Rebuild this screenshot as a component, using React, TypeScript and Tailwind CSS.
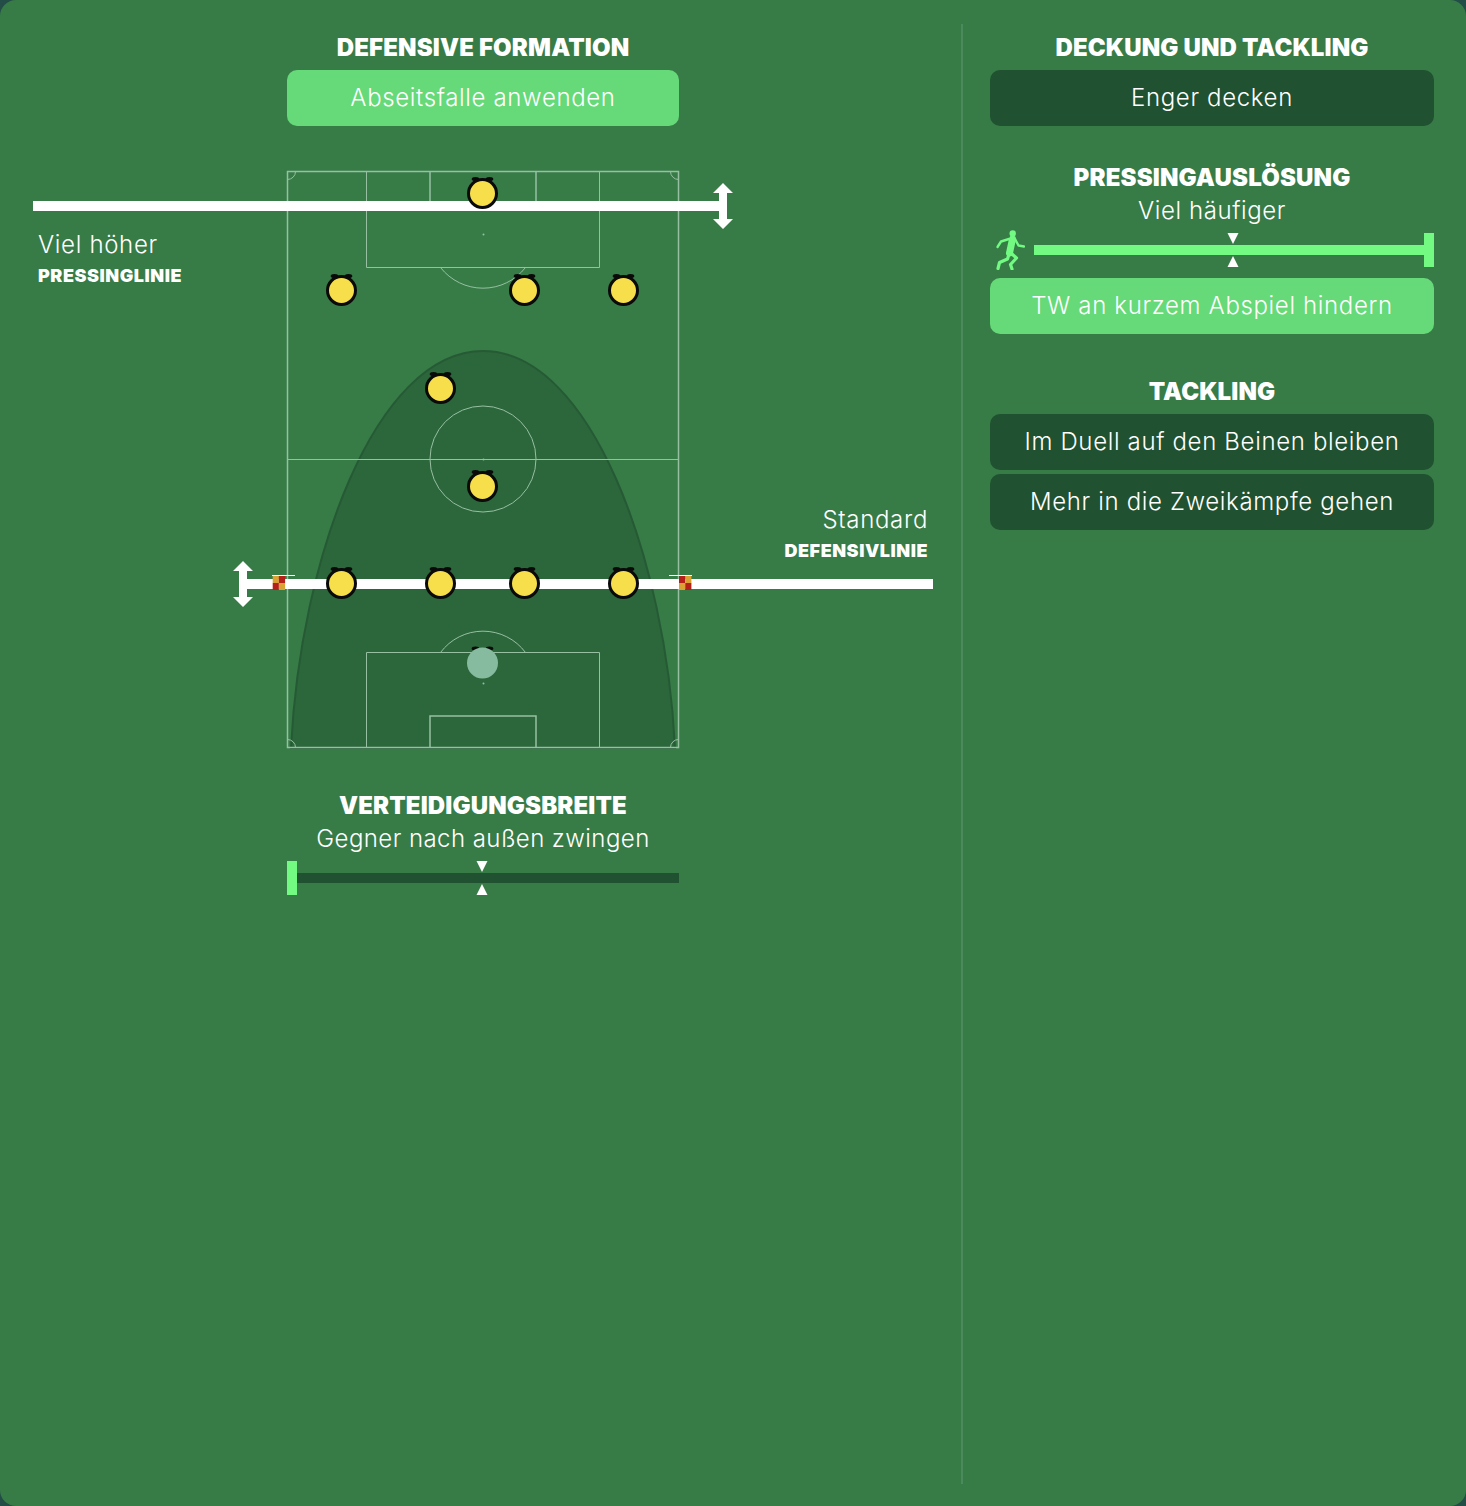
const fontStack = { fontFamily: "Inter, 'Liberation Sans', sans-serif" };

const players = [
  [482.5, 193.5],
  [341.5, 290.5],
  [524.5, 290.5],
  [623.5, 290.5],
  [440.5, 388.5],
  [482.5, 486.5],
  [341.5, 583.5],
  [440.5, 583.5],
  [524.5, 583.5],
  [623.5, 583.5],
];

function Heading({ children }: { children: React.ReactNode }) {
  return (
    <h2 className="text-center text-[24px] leading-[28px] font-black tracking-[0.006em] text-white">
      {children}
    </h2>
  );
}

function Value({ children }: { children: React.ReactNode }) {
  return (
    <p className="text-center text-[24px] leading-[32px] font-light tracking-[0.025em] text-white">
      {children}
    </p>
  );
}

function Pill({ children, active }: { children: React.ReactNode; active?: boolean }) {
  return (
    <button
      className={
        "flex h-14 w-full items-center justify-center rounded-[10px] text-[24px] font-light tracking-[0.027em] text-white " +
        (active ? "bg-[#66d978]" : "bg-[#205130]")
      }
    >
      {children}
    </button>
  );
}

function Markers() {
  return (
    <svg className="absolute top-0 left-1/2 -ml-[7px] h-[34px] w-[12px]" viewBox="0 0 12 34">
      <path d="M.5 0h11l-5.500 11z" fill="#fff" />
      <path d="M.5 34h11l-5.500-11z" fill="#fff" />
    </svg>
  );
}

function Runner() {
  return (
    <svg className="h-[40px] w-[30px] shrink-0" viewBox="0 0 30 40" fill="none">
      <circle cx="17.7" cy="3.4" r="3.2" fill="#72fa82" />
      <g stroke="#72fa82" strokeLinecap="round" strokeLinejoin="round">
        <path d="M17.5 9 14.5 23" strokeWidth="7" />
        <path d="M14 9 6 11.500 2.500 17" strokeWidth="2.400" />
        <path d="M20 9 23.500 15.500 29 16.500" strokeWidth="2.400" />
        <path d="M14 24 12.500 29 4.500 32.500 3 38.500" strokeWidth="3.200" />
        <path d="M17 24 21.500 28 15.500 34.500 17 39" strokeWidth="3.200" />
      </g>
    </svg>
  );
}

function Arrow({ x, y }: { x: number; y: number }) {
  return (
    <path
      transform={`translate(${x} ${y})`}
      d="M0 0 10 10H4V36H10L0 46-10 36H-4V10H-10z"
      fill="#fff"
    />
  );
}

function Flag({ x, flip }: { x: number; flip?: boolean }) {
  const orange = "#dba132";
  const red = "#b5211a";
  return (
    <g>
      <rect x={x} y={576} width={6.2} height={7} fill={flip ? red : orange} />
      <rect x={x + 6.2} y={576} width={6.2} height={7} fill={flip ? orange : red} />
      <rect x={x} y={583} width={6.2} height={7} fill={flip ? orange : red} />
      <rect x={x + 6.2} y={583} width={6.2} height={7} fill={flip ? red : orange} />
    </g>
  );
}

function Token({ x, y, keeper }: { x: number; y: number; keeper?: boolean }) {
  return (
    <g transform={`translate(${x} ${y})`}>
      <ellipse cx="-7" cy="-14.5" rx="3.800" ry="2" fill="#0a0a0a" />
      <ellipse cx="7" cy="-14.5" rx="3.800" ry="2" fill="#0a0a0a" />
      {keeper ? (
        <circle r="15.5" fill="#86bb9f" />
      ) : (
        <circle r="14" fill="#f6df4a" stroke="#0a0a0a" strokeWidth="3" />
      )}
    </g>
  );
}

function PitchDiagram() {
  const line = "#97c0a2";
  return (
    <svg className="absolute top-0 left-0 h-[620px] w-[962px]" viewBox="0 160 962 620" fill="none">
      {/* pressing shape */}
      <path
        d="M291 748C300 560 375 351 483 351S666 560 675 748z"
        fill="#2c663b"
        stroke="#265a35"
        strokeWidth="2"
      />
      <g stroke={line} strokeWidth="1">
        <rect x="287.5" y="171.5" width="391" height="576" strokeWidth="1.5" />
        <path d="M287.5 459.5H678.5" />
        <circle cx="483" cy="459" r="53" />
        <path d="M366.5 171.500V267.500H599.500V171.500" />
        <path d="M430 171.500V203.500H536V171.500" strokeWidth="1.5" />
        <path d="M366.500 747.500V652.500H599.500V747.500" />
        <path d="M430 747.500V716H536V747.500" strokeWidth="1.5" />
        <path d="M440.500 267.500A54 54 0 0 0 525.500 267.500" />
        <path d="M440.500 652.500A53 53 0 0 1 525.500 652.500" />
        <path d="M287.500 179.500A8 8 0 0 0 295.500 171.500" />
        <path d="M670.500 171.500A8 8 0 0 0 678.500 179.500" />
        <path d="M295.500 747.500A8 8 0 0 0 287.500 739.500" />
        <path d="M678.500 739.500A8 8 0 0 0 670.500 747.500" />
      </g>
      <g fill={line}>
        <circle cx="483.5" cy="234.5" r="1" />
        <circle cx="483.5" cy="459.5" r="1" />
        <circle cx="483.5" cy="683.5" r="1" />
      </g>
      {/* pressing line */}
      <rect x="33" y="201" width="690" height="10" fill="#fff" />
      <Arrow x={723} y={183} />
      {/* defensive line */}
      <rect x="243" y="579" width="690" height="10" fill="#fff" />
      <Arrow x={243} y={561} />
      <Flag x={272.7} />
      <Flag x={679} flip />
      <path d="M272 575.5H295M669 575.5H692" stroke="#fff" strokeWidth="1" />
      {players.map(([x, y]) => (
        <Token key={`${x}-${y}`} x={x} y={y} />
      ))}
      <Token x={482.5} y={663} keeper />
    </svg>
  );
}

export default function App() {
  return (
    <div className="h-[1506px] w-full bg-[#234d47]" style={fontStack}>
      <div className="flex h-full rounded-2xl bg-[#377b47] pt-6 pb-[22px]">
        {/* left side */}
        <div className="flex w-[961px] shrink-0 flex-col">
          <div className="mt-[10px] ml-[287px] w-[392px]">
            <Heading>DEFENSIVE FORMATION</Heading>
            <div className="mt-[8px]">
              <Pill active>Abseitsfalle anwenden</Pill>
            </div>
          </div>
          <div className="relative mt-[34px] h-[620px] w-full">
            <PitchDiagram />
            <div className="absolute top-[69px] left-[38px] text-white">
              <p className="text-[24px] leading-[32px] font-light tracking-[0.028em]">Viel höher</p>
              <p className="mt-[2px] text-[18px] leading-[26px] font-black tracking-[0.03em]">PRESSINGLINIE</p>
            </div>
            <div className="absolute top-[344px] right-[33px] text-right text-white">
              <p className="text-[24px] leading-[32px] font-light tracking-[0.028em]">Standard</p>
              <p className="mt-[2px] text-[18px] leading-[26px] font-black tracking-[0.03em]">DEFENSIVLINIE</p>
            </div>
          </div>
          <div className="mt-[12px] ml-[287px] w-[392px]">
            <Heading>VERTEIDIGUNGSBREITE</Heading>
            <div className="mt-[3px]">
              <Value>
                <span className="tracking-[0.018em]">Gegner nach außen zwingen</span>
              </Value>
            </div>
            <div className="relative mt-[6px] h-[34px]">
              <div className="absolute top-[12px] right-0 left-0 h-[10px] bg-[#205130]" />
              <div className="absolute top-0 left-0 h-[34px] w-[10px] bg-[#72fa82]" />
              <Markers />
            </div>
          </div>
        </div>

        {/* divider */}
        <div className="h-full w-[2px] shrink-0 bg-[#4b8a5c]" />

        {/* right side */}
        <div className="mt-[10px] ml-[27px] w-[444px]">
          <Heading>DECKUNG UND TACKLING</Heading>
          <div className="mt-[8px]">
            <Pill>Enger decken</Pill>
          </div>
          <div className="mt-[38px]">
            <Heading>PRESSINGAUSLÖSUNG</Heading>
          </div>
          <div className="mt-[3px]">
            <Value>Viel häufiger</Value>
          </div>
          <div className="mt-[6px] flex h-[34px] items-center gap-[9px] pl-[5px]">
            <Runner />
            <div className="relative h-[34px] grow">
              <div className="absolute top-[12px] right-0 left-0 h-[10px] bg-[#72fa82]" />
              <div className="absolute top-0 right-0 h-[34px] w-[10px] bg-[#72fa82]" />
              <Markers />
            </div>
          </div>
          <div className="mt-[11px]">
            <Pill active>TW an kurzem Abspiel hindern</Pill>
          </div>
          <div className="mt-[44px]">
            <Heading>TACKLING</Heading>
          </div>
          <div className="mt-[8px] flex flex-col gap-1">
            <Pill>Im Duell auf den Beinen bleiben</Pill>
            <Pill>Mehr in die Zweikämpfe gehen</Pill>
          </div>
        </div>
      </div>
    </div>
  );
}
